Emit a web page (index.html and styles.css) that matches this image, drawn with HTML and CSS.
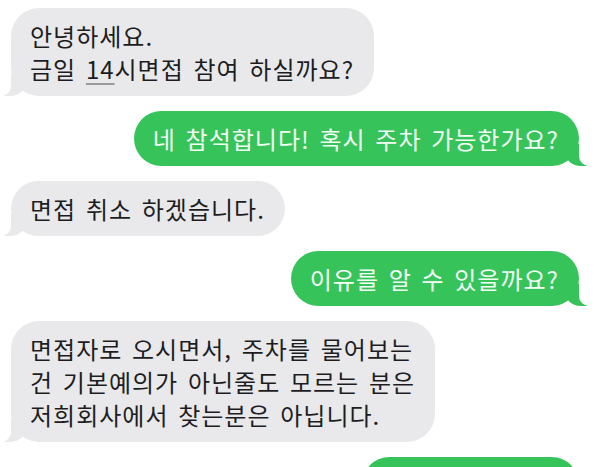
FILE: index.html
```html
<!DOCTYPE html>
<html lang="ko">
<head>
  <meta charset="UTF-8" />
  <meta name="viewport" content="width=device-width, initial-scale=1.0"/>
  <title>메시지</title>
  <link rel="stylesheet" href="styles.css">
</head>
<body>
<div class="thread">
  <div class="bubble them">안녕하세요.<br>금일 <span class="link">14</span>시면접 참여 하실까요?</div>
  <div class="bubble me">네 참석합니다! 혹시 주차 가능한가요?</div>
  <div class="bubble them">면접 취소 하겠습니다.</div>
  <div class="bubble me">이유를 알 수 있을까요?</div>
  <div class="bubble them">면접자로 오시면서, 주차를 물어보는<br>건 기본예의가 아닌줄도 모르는 분은<br>저희회사에서 찾는분은 아닙니다.</div>
  <div class="bubble me cut">&nbsp;</div>
</div>
</body>
</html>
```
FILE: styles.css
```css
:root {
  --bg: #ffffff;
  --grey: #e9e9eb;
  --green: #36c45a;
  --text: #1d1d1f;
}

body {
  margin: 0;
  background: var(--bg);
  font-family: "Noto Sans CJK KR", "Noto Sans", sans-serif;
  overflow: hidden;
}

.thread {
  display: flex;
  flex-direction: column;
  gap: 15px;
  padding: 8px 21px 0 11px;
}

.bubble {
  position: relative;
  padding: 11px 20px 11px 19px;
  border-radius: 28px;
  font-size: 24px;
  letter-spacing: 1px;
  word-spacing: 2px;
  line-height: 33px;
  color: var(--text);
  white-space: nowrap;
}

.them {
  align-self: flex-start;
  background: var(--grey);
}

.me {
  align-self: flex-end;
  background: var(--green);
  color: #f4fff6;
}

/* tails */
.bubble::before,
.bubble::after {
  content: "";
  position: absolute;
  bottom: 0;
  height: 22px;
}

.them::before {
  left: -7px;
  width: 22px;
  background: var(--grey);
  border-bottom-right-radius: 16px 14px;
}

.them::after {
  left: -26px;
  width: 26px;
  background: var(--bg);
  border-bottom-right-radius: 10px;
}

.me::before {
  right: -8px;
  width: 22px;
  background: var(--green);
  border-bottom-left-radius: 16px 14px;
}

.me::after {
  right: -26px;
  width: 26px;
  background: var(--bg);
  border-bottom-left-radius: 10px;
}

.link {
  text-decoration: underline;
  text-decoration-color: #9a9a9a;
  text-underline-offset: 4px;
}

.long {
  letter-spacing: 1.5px;
}

.cut {
  width: 178px;
}
```
